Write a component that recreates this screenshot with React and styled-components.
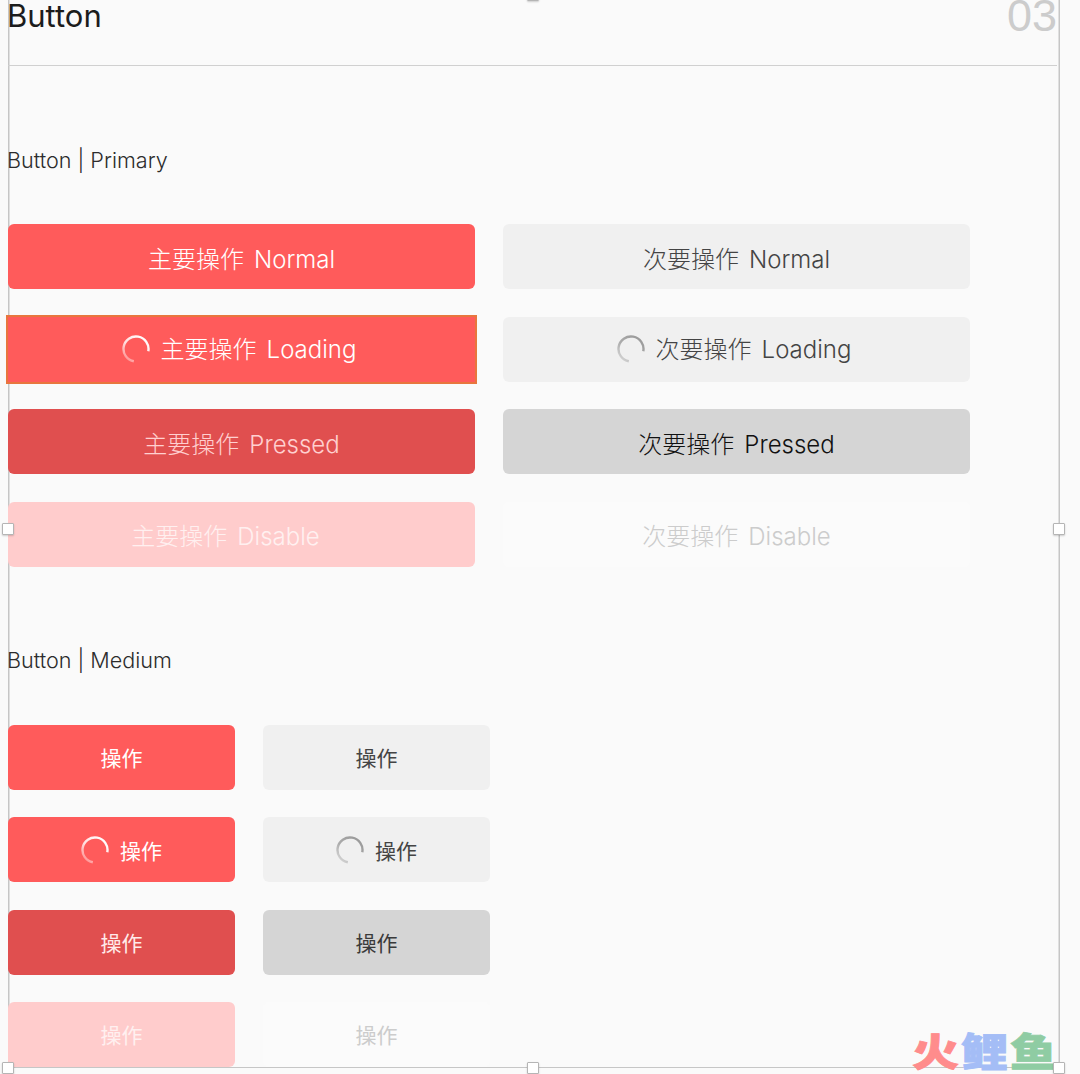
import React, {useId} from 'react'
import styled, {createGlobalStyle} from 'styled-components'

const GlobalStyle = createGlobalStyle`
    html, body {
        margin:0;
        padding:0;
        background-color:#fafafa;
        overflow:hidden;
    }
    body {
        font-family:'Inter','Noto Sans CJK SC',sans-serif;
    }
`

const Page = styled.div`
    width:1080px;
    height:1074px;
    padding-left:8px;
    box-sizing:border-box;
`

const Frame = styled.div`
    position:relative;
    width:1052px;
    height:1068px;
    box-shadow:inset 1.5px 0 0 #c6c6c6, inset -1.5px 0 0 #c6c6c6, inset 0 -1px 0 #c6c6c6;
`

const Header = styled.header`
    display:flex;
    justify-content:space-between;
    align-items:flex-start;
    width:1049px;
    height:65px;
    border-bottom:1px solid #d0d0d0;
`

const Title = styled.h1`
    margin:0 0 0 -1px;
    font-size:31px;
    font-weight:400;
    line-height:32px;
    color:#1c1c1c;
`

const PageNumber = styled.span`
    font-family:'Liberation Sans',sans-serif;
    font-size:45px;
    line-height:32px;
    color:#cccccc;
`

const SectionLabel = styled.h2`
    margin:${props => props.$top}px 0 ${props => props.$bottom}px -1px;
    font-size:21.6px;
    font-weight:300;
    line-height:30px;
    color:#2c2c2c;
`

const ButtonGrid = styled.div`
    display:grid;
    grid-template-columns:repeat(2, ${props => props.$column}px);
    grid-auto-rows:65px;
    column-gap:28px;
    row-gap:27.5px;
`

const variants = {
    primary: {bg:'#ff5b5b', color:'#ffffff'},
    primaryPressed: {bg:'#e04f4f', color:'#ffd0d0'},
    primaryPressedMedium: {bg:'#e04f4f', color:'#ffeaea'},
    primaryDisabled: {bg:'#ffcccc', color:'#fff0f0'},
    secondary: {bg:'#f0f0f0', color:'#444444'},
    secondaryPressed: {bg:'#d5d5d5', color:'#111111'},
    secondaryPressedMedium: {bg:'#d5d5d5', color:'#3a3a3a'},
    secondaryDisabled: {bg:'#fbfbfb', color:'#cccccc'},
}

const ActionButton = styled.button`
    display:flex;
    align-items:center;
    justify-content:center;
    gap:11px;
    padding:0 ${props => props.$shift || 0}px 0 0;
    border:none;
    border-radius:${props => props.$square ? 0 : 6}px;
    background-color:${props => variants[props.$variant].bg};
    color:${props => variants[props.$variant].color};
    font-family:inherit;
    font-size:${props => props.$size}px;
    font-weight:${props => props.$size > 22 ? 300 : 400};
    line-height:1;
    white-space:pre;
    box-shadow:${props => props.$focus ? '0 0 0 2px #e8763e' : 'none'};
`

const ButtonText = styled.span`
    padding-top:${props => props.$drop}px;
`

const WordGap = styled.span`
    margin-left:10px;
`

const Handle = styled.i`
    position:absolute;
    left:${props => props.$x}px;
    top:${props => props.$y}px;
    width:10px;
    height:10px;
    margin:-6px 0 0 -6px;
    background-color:#ffffff;
    border:1px solid #b5b5b5;
    border-radius:1px;
    box-shadow:0 1px 2px rgba(0,0,0,0.18);
`

const Watermark = styled.div`
    position:absolute;
    right:3px;
    bottom:0;
    display:flex;
    gap:2px;
    font-family:'Noto Sans CJK SC',sans-serif;
    font-size:47px;
    font-weight:900;
    line-height:47px;
    -webkit-text-stroke:1px currentColor;
    transform:scaleY(0.82);
    transform-origin:bottom;
`

const Mark = styled.span`
    color:${props => props.$color};
`

function Spinner({light}) {
    const id = useId()
    const tone = light ? '#ffffff' : '#9a9a9a'
    return (
        <svg width="28" height="28" viewBox="0 0 28 28" fill="none">
            <defs>
                <linearGradient id={id} x1="24" y1="4" x2="6" y2="26" gradientUnits="userSpaceOnUse">
                    <stop offset="0" stopColor={tone} stopOpacity="1" />
                    <stop offset="0.55" stopColor={tone} stopOpacity="0.8" />
                    <stop offset="1" stopColor={tone} stopOpacity="0.35" />
                </linearGradient>
            </defs>
            <path d="M26.3 16.2A12.5 12.5 0 1 0 11.8 26.3" stroke={`url(#${id})`} strokeWidth="2.4" />
        </svg>
    )
}

function Grid({column, size, rows}) {
    const dropFor = row => {
        if (size > 22) return row.loading ? 2 : 6
        return row.loading ? 4 : 2
    }
    return (
        <ButtonGrid $column={column}>
            {rows.map(row => (
                <ActionButton key={row.variant + row.en + row.loading} $variant={row.variant} $size={size} $focus={row.focus} $shift={row.shift} $square={row.square}>
                    {row.loading && <Spinner light={row.variant === 'primary'} />}
                    <ButtonText $drop={dropFor(row)}>
                        {row.cn}{row.en && <WordGap>{row.en}</WordGap>}
                    </ButtonText>
                </ActionButton>
            ))}
        </ButtonGrid>
    )
}

const primaryRows = [
    {variant:'primary', cn:'主要操作', en:'Normal'},
    {variant:'secondary', cn:'次要操作', en:'Normal'},
    {variant:'primary', cn:'主要操作', en:'Loading', loading:true, focus:true, square:true, shift:5},
    {variant:'secondary', cn:'次要操作', en:'Loading', loading:true, shift:5},
    {variant:'primaryPressed', cn:'主要操作', en:'Pressed'},
    {variant:'secondaryPressed', cn:'次要操作', en:'Pressed'},
    {variant:'primaryDisabled', cn:'主要操作', en:'Disable', shift:32},
    {variant:'secondaryDisabled', cn:'次要操作', en:'Disable'},
]

const mediumRows = [
    {variant:'primary', cn:'操作', en:''},
    {variant:'secondary', cn:'操作', en:''},
    {variant:'primary', cn:'操作', en:'', loading:true},
    {variant:'secondary', cn:'操作', en:'', loading:true},
    {variant:'primaryPressedMedium', cn:'操作', en:''},
    {variant:'secondaryPressedMedium', cn:'操作', en:''},
    {variant:'primaryDisabled', cn:'操作', en:''},
    {variant:'secondaryDisabled', cn:'操作', en:''},
]

const handles = [[525,-5],[0,529],[1051,529],[0,1068],[525,1068],[1051,1068]]

export default function App() {
    return (
        <Page>
            <GlobalStyle />
            <Frame>
                <Header>
                    <Title>Button</Title>
                    <PageNumber>03</PageNumber>
                </Header>
                <SectionLabel $top={79} $bottom={49}>Button | Primary</SectionLabel>
                <Grid column={467} size={24} rows={primaryRows} />
                <SectionLabel $top={78} $bottom={50}>Button | Medium</SectionLabel>
                <Grid column={227} size={21} rows={mediumRows} />
                <Watermark>
                    <Mark $color="#ff8c8c">火</Mark>
                    <Mark $color="#a4bdf6">鲤</Mark>
                    <Mark $color="#8fcca3">鱼</Mark>
                </Watermark>
                {handles.map(([x, y]) => <Handle key={`${x}-${y}`} $x={x} $y={y} />)}
            </Frame>
        </Page>
    )
}
